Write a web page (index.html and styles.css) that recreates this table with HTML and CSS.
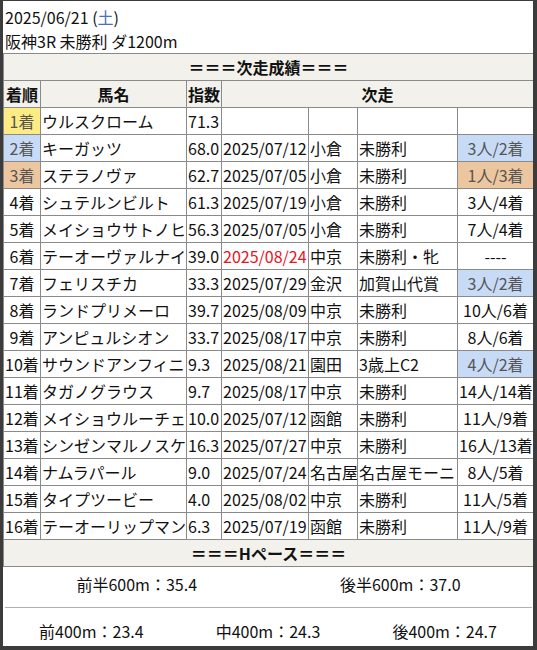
FILE: index.html
```html
<!DOCTYPE html>
<html lang="ja">
<head>
<meta charset="utf-8">
<link rel="stylesheet" href="styles.css">
</head>
<body>
<div class="card">
  <div class="head">
    <div>2025/06/21 (<span class="sat">土</span>)</div>
    <div>阪神3R 未勝利 ダ1200m</div>
  </div>
  <table class="res">
    <colgroup>
      <col class="c1"><col class="c2"><col class="c3"><col class="c4"><col class="c5"><col class="c6"><col class="c7">
    </colgroup>
    <tr class="title"><td colspan="7">＝＝＝次走成績＝＝＝</td></tr>
    <tr class="hdr"><th>着順</th><th>馬名</th><th>指数</th><th colspan="4">次走</th></tr>
    <tr><td class="pos p1">1着</td><td>ウルスクローム</td><td>71.3</td><td></td><td></td><td></td><td></td></tr>
    <tr><td class="pos p2">2着</td><td>キーガッツ</td><td>68.0</td><td>2025/07/12</td><td>小倉</td><td>未勝利</td><td class="r p2">3人/2着</td></tr>
    <tr><td class="pos p3">3着</td><td>ステラノヴァ</td><td>62.7</td><td>2025/07/05</td><td>小倉</td><td>未勝利</td><td class="r p3">1人/3着</td></tr>
    <tr><td class="pos">4着</td><td>シュテルンビルト</td><td>61.3</td><td>2025/07/19</td><td>小倉</td><td>未勝利</td><td class="r">3人/4着</td></tr>
    <tr><td class="pos">5着</td><td>メイショウサトノヒ</td><td>56.3</td><td>2025/07/05</td><td>小倉</td><td>未勝利</td><td class="r">7人/4着</td></tr>
    <tr><td class="pos">6着</td><td>テーオーヴァルナイ</td><td>39.0</td><td class="future">2025/08/24</td><td>中京</td><td>未勝利・牝</td><td class="r">----</td></tr>
    <tr><td class="pos">7着</td><td>フェリスチカ</td><td>33.3</td><td>2025/07/29</td><td>金沢</td><td>加賀山代賞</td><td class="r p2">3人/2着</td></tr>
    <tr><td class="pos">8着</td><td>ランドプリメーロ</td><td>39.7</td><td>2025/08/09</td><td>中京</td><td>未勝利</td><td class="r">10人/6着</td></tr>
    <tr><td class="pos">9着</td><td>アンピュルシオン</td><td>33.7</td><td>2025/08/17</td><td>中京</td><td>未勝利</td><td class="r">8人/6着</td></tr>
    <tr><td class="pos">10着</td><td>サウンドアンフィニ</td><td>9.3</td><td>2025/08/21</td><td>園田</td><td>3歳上C2</td><td class="r p2">4人/2着</td></tr>
    <tr><td class="pos">11着</td><td>タガノグラウス</td><td>9.7</td><td>2025/08/17</td><td>中京</td><td>未勝利</td><td class="r">14人/14着</td></tr>
    <tr><td class="pos">12着</td><td>メイショウルーチェ</td><td>10.0</td><td>2025/07/12</td><td>函館</td><td>未勝利</td><td class="r">11人/9着</td></tr>
    <tr><td class="pos">13着</td><td>シンゼンマルノスケ</td><td>16.3</td><td>2025/07/27</td><td>中京</td><td>未勝利</td><td class="r">16人/13着</td></tr>
    <tr><td class="pos">14着</td><td>ナムラパール</td><td>9.0</td><td>2025/07/24</td><td>名古屋</td><td>名古屋モーニ</td><td class="r">8人/5着</td></tr>
    <tr><td class="pos">15着</td><td>タイプツービー</td><td>4.0</td><td>2025/08/02</td><td>中京</td><td>未勝利</td><td class="r">11人/5着</td></tr>
    <tr><td class="pos">16着</td><td>テーオーリップマン</td><td>6.3</td><td>2025/07/19</td><td>函館</td><td>未勝利</td><td class="r">11人/9着</td></tr>
    <tr class="title"><td colspan="7">＝＝＝Hペース＝＝＝</td></tr>
  </table>
  <div class="pace pace-half">
    <div>前半600m：35.4</div>
    <div>後半600m：37.0</div>
  </div>
  <div class="pace pace-third">
    <div>前400m：23.4</div>
    <div>中400m：24.3</div>
    <div>後400m：24.7</div>
  </div>
</div>
</body>
</html>
```

FILE: styles.css
```css
html, body {
  margin: 0;
  padding: 0;
}
body {
  background: #3c3c3c;
  padding: 1px 4px 4px 3px;
  font-family: "Noto Sans CJK JP", "Noto Sans", sans-serif;
  font-size: 16px;
  color: #111;
}
.card {
  background: #fff;
  height: 645px;
  overflow: hidden;
}
.head {
  padding: 4px 2px 0 2px;
  line-height: 24px;
}
.sat {
  color: #4a6fc0;
}
.res {
  width: 100%;
  border-collapse: collapse;
  table-layout: fixed;
}
.c1 { width: 37px; }
.c2 { width: 146px; }
.c3 { width: 35px; }
.c4 { width: 87px; }
.c5 { width: 49px; }
.c6 { width: 100px; }
.c7 { width: 76px; }
.res td, .res th {
  border: 1px solid #8a8a8a;
  height: 26px;
  padding: 0 1px;
  line-height: 24px;
  white-space: nowrap;
  overflow: hidden;
  text-align: left;
  font-weight: normal;
}
.res tr.title td {
  background: #f2f1ec;
  font-weight: bold;
  text-align: center;
}
.res tr.hdr th {
  background: #f2f1ec;
  font-weight: bold;
  text-align: center;
}
.res td.pos {
  text-align: center;
  padding: 0;
}
.res td.r {
  text-align: center;
}
.p1 { background: #fdeb83; color: #555; }
.p2 { background: #c8dbf6; color: #555; }
.p3 { background: #ecc69f; color: #555; }
.future { color: #e8141e; }
.pace {
  display: grid;
  line-height: 24px;
  text-align: center;
}
.pace-half {
  grid-template-columns: 1fr 1fr;
  padding: 5px 0 11px;
  border-bottom: 1px solid #b0b0b0;
  margin: 0 1px 0 2px;
}
.pace-third {
  grid-template-columns: 1fr 1fr 1fr;
  padding: 11px 0 0;
}
```
